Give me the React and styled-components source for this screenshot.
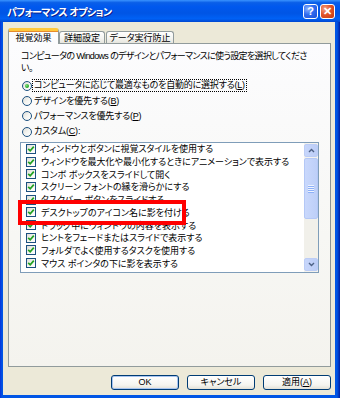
import React from "react";
import styled, { createGlobalStyle, css } from "styled-components";

const GlobalStyle = createGlobalStyle`
	html, body {
		margin: 0;
		padding: 0;
		background: #ece9d8;
	}
	body {
		font-family: "Liberation Sans", "Noto Sans CJK JP", sans-serif;
		font-feature-settings: "palt";
		font-size: 9px;
		color: #000;
	}
`;

const options = [
	{ label: "コンピュータに応じて最適なものを自動的に選択する", key: "L", checked: true, focus: true },
	{ label: "デザインを優先する", key: "B" },
	{ label: "パフォーマンスを優先する", key: "P" },
	{ label: "カスタム", key: "C", colon: true },
];

const effects = [
	"ウィンドウとボタンに視覚スタイルを使用する",
	"ウィンドウを最大化や最小化するときにアニメーションで表示する",
	"コンボ ボックスをスライドして開く",
	"スクリーン フォントの縁を滑らかにする",
	"タスクバー ボタンをスライドする",
	"デスクトップのアイコン名に影を付ける",
	"ドラッグ中にウィンドウの内容を表示する",
	"ヒントをフェードまたはスライドで表示する",
	"フォルダでよく使用するタスクを使用する",
	"マウス ポインタの下に影を表示する",
];

const Window = styled.div`
	width: 340px;
	height: 398px;
	display: flex;
	flex-direction: column;
	background: linear-gradient(90deg, #0831d9 0, #0055e5 2px, #0055e5 calc(100% - 3px), #001ea0 100%);
	overflow: hidden;
`;

const TitleBar = styled.div`
	height: 22px;
	flex-shrink: 0;
	display: flex;
	align-items: center;
	padding: 0 5px 0 7px;
	background: linear-gradient(
		180deg,
		#3a93ff 0,
		#0a5fe8 12%,
		#0058ee 30%,
		#0055e5 60%,
		#0061f5 85%,
		#0047d0 100%
	);
`;

const TitleText = styled.div`
	flex: 1;
	color: #fff;
	font-weight: bold;
	font-size: 10px;
	letter-spacing: -0.6px;
	text-shadow: 1px 1px 0 #0a1e8c;
`;

const TitleButton = styled.div`
	width: 15px;
	height: 15px;
	margin-left: 2px;
	border: 1px solid #fff;
	border-radius: 3px;
	box-sizing: border-box;
	display: flex;
	align-items: center;
	justify-content: center;
	color: #fff;
	font-weight: bold;
	font-size: 11px;
	line-height: 1;
	${(p) =>
		p.close
			? css`
					background: radial-gradient(circle at 30% 30%, #f0a48a 0, #e2542a 45%, #c13a12 100%);
			  `
			: css`
					background: radial-gradient(circle at 30% 30%, #8fb4ff 0, #2f6cf0 45%, #1a4fd6 100%);
			  `}
`;

const Client = styled.div`
	flex: 1;
	margin: 0 5px 3px 3px;
	background: #ece9d8;
	display: flex;
	flex-direction: column;
	padding: 6px 4px 0 5px;
`;

const TabStrip = styled.div`
	display: flex;
	align-items: flex-end;
	height: 15px;
	position: relative;
	z-index: 1;
`;

const Tab = styled.div`
	box-sizing: border-box;
	width: ${(p) => p.w}px;
	margin-right: ${(p) => p.gap || 0}px;
	border: 1px solid #919b9c;
	border-bottom: none;
	border-radius: 3px 3px 0 0;
	display: flex;
	align-items: center;
	justify-content: center;
	${(p) =>
		p.active
			? css`
					height: 16px;
					margin-bottom: -1px;
					background: #fcfcfe;
					border-top: 3px solid #ffc83c;
					box-shadow: inset 0 1px 0 #e68b2c;
					padding-bottom: 1px;
			  `
			: css`
					height: 12px;
					background: linear-gradient(180deg, #ffffff 0, #f3f3ef 60%, #e6e5de 100%);
			  `}
`;

const Panel = styled.div`
	flex: 1;
	box-sizing: border-box;
	border: 1px solid #919b9c;
	border-right-color: #8a9293;
	background: linear-gradient(180deg, #fcfcfe 0, #f7f7f4 60%, #f4f3ee 100%);
	padding: 6px 11px 0 11px;
	display: flex;
	flex-direction: column;
`;

const Description = styled.div`
	line-height: 12px;
	white-space: nowrap;
	padding-left: 1px;
	letter-spacing: -0.65px;
`;

const RadioGroup = styled.div`
	display: flex;
	flex-direction: column;
	margin-top: 4px;
`;

const RadioRow = styled.div`
	height: 15.4px;
	display: flex;
	align-items: center;
	padding-left: 2px;
`;

const RadioCircle = styled.span`
	width: 10px;
	height: 10px;
	box-sizing: border-box;
	border-radius: 50%;
	border: 1px solid #1c5180;
	background: linear-gradient(135deg, #dcdcd7 0, #f4f4f0 50%, #ffffff 100%);
	display: flex;
	align-items: center;
	justify-content: center;
	margin-right: 1px;
	flex-shrink: 0;
`;

const RadioDot = styled.span`
	width: 4px;
	height: 4px;
	border-radius: 50%;
	background: radial-gradient(circle at 35% 35%, #7be37b 0, #21a121 70%);
`;

const Label = styled.span`
	padding: 0 1px;
	line-height: 11px;
	white-space: nowrap;
	letter-spacing: -0.2px;
	${(p) =>
		p.focus &&
		css`
			outline: 1px dotted #000;
			outline-offset: 0;
		`}
`;

const Key = styled.span`
	text-decoration: underline;
`;

const ListBox = styled.div`
	position: relative;
	margin-top: 2px;
	height: 131px;
	box-sizing: border-box;
	border: 1px solid #7f9db9;
	background: #fff;
	display: flex;
`;

const ItemList = styled.div`
	flex: 1;
	overflow: hidden;
`;

const Item = styled.div`
	height: 12.7px;
	display: flex;
	align-items: center;
	padding-left: 5px;
	white-space: nowrap;
`;

const CheckBox = styled.span`
	width: 10px;
	height: 10px;
	box-sizing: border-box;
	border: 1px solid #1c5180;
	background: linear-gradient(135deg, #dcdcd7 0, #f4f4f0 50%, #ffffff 100%);
	margin-right: 5px;
	flex-shrink: 0;
	display: flex;
	align-items: center;
	justify-content: center;
`;

const ScrollBar = styled.div`
	width: 14px;
	display: flex;
	flex-direction: column;
	background: #f3f2ee;
`;

const ScrollButton = styled.div`
	height: 13px;
	box-sizing: border-box;
	border: 1px solid #bccdf6;
	border-radius: 2px;
	background: linear-gradient(90deg, #c7d6fb 0, #bccdf6 100%);
	display: flex;
	align-items: center;
	justify-content: center;
	margin: ${(p) => (p.down ? "0 0 1px" : "1px 0 0")};
`;

const Thumb = styled.div`
	height: 61px;
	box-sizing: border-box;
	margin-top: 1px;
	border: 1px solid #b4c8f6;
	border-radius: 2px;
	background: linear-gradient(90deg, #c9d8fc 0, #bdcff8 100%);
	display: flex;
	flex-direction: column;
	align-items: center;
	justify-content: center;
	gap: 1px;
`;

const Grip = styled.span`
	width: 6px;
	height: 1px;
	background: #eef3fe;
	box-shadow: 0 1px 0 #8cb0f8;
`;

const Track = styled.div`
	flex: 1;
	background: #f1f0ea;
`;

const Highlight = styled.div`
	position: absolute;
	left: -3px;
	top: 57px;
	width: 168px;
	height: 25px;
	box-sizing: border-box;
	border: 4px solid #ff0000;
	pointer-events: none;
`;

const ButtonRow = styled.div`
	display: flex;
	justify-content: flex-end;
	gap: 8px;
	margin: 8px 0 5px;
`;

const Button = styled.div`
	width: 68px;
	height: 15px;
	box-sizing: border-box;
	border: 1px solid #003c74;
	border-radius: 3px;
	background: linear-gradient(180deg, #ffffff 0, #f5f4ef 70%, #e3e0d6 100%);
	display: flex;
	align-items: center;
	justify-content: center;
	line-height: 1;
	${(p) =>
		p.primary &&
		css`
			box-shadow: inset 0 0 0 1px #a8c4f0;
		`}
`;

const Check = () => (
	<svg width="8" height="8" viewBox="0 0 8 8">
		<path d="M1.2 3.8 L3.2 5.8 L6.8 1.6" fill="none" stroke="#21a121" strokeWidth="1.7" />
	</svg>
);

const Chevron = ({ down }) => (
	<svg width="7" height="5" viewBox="0 0 7 5">
		<path
			d={down ? "M1 1 L3.5 3.5 L6 1" : "M1 4 L3.5 1.5 L6 4"}
			fill="none"
			stroke="#4d6185"
			strokeWidth="1.4"
		/>
	</svg>
);

const App = () => {
	return (
		<>
			<GlobalStyle />
			<Window>
				<TitleBar>
					<TitleText>パフォーマンス オプション</TitleText>
					<TitleButton>?</TitleButton>
					<TitleButton close>✕</TitleButton>
				</TitleBar>
				<Client>
					<TabStrip>
						<Tab active w={51} gap={0}>視覚効果</Tab>
						<Tab w={46} gap={1}>詳細設定</Tab>
						<Tab w={68}>データ実行防止</Tab>
					</TabStrip>
					<Panel>
						<Description>
							コンピュータの Windows のデザインとパフォーマンスに使う設定を選択してくださ
							<br />
							い。
						</Description>
						<RadioGroup>
							{options.map((o) => (
								<RadioRow key={o.key}>
									<RadioCircle>{o.checked && <RadioDot />}</RadioCircle>
									<Label focus={o.focus}>
										{o.label}(<Key>{o.key}</Key>){o.colon && ":"}
									</Label>
								</RadioRow>
							))}
						</RadioGroup>
						<ListBox>
							<ItemList>
								{effects.map((e, i) => (
									<Item key={i}>
										<CheckBox>
											<Check />
										</CheckBox>
										{e}
									</Item>
								))}
							</ItemList>
							<ScrollBar>
								<ScrollButton>
									<Chevron />
								</ScrollButton>
								<Thumb>
									<Grip />
									<Grip />
									<Grip />
									<Grip />
								</Thumb>
								<Track />
								<ScrollButton down>
									<Chevron down />
								</ScrollButton>
							</ScrollBar>
							<Highlight />
						</ListBox>
					</Panel>
					<ButtonRow>
						<Button primary>OK</Button>
						<Button>キャンセル</Button>
						<Button>
							適用(<Key>A</Key>)
						</Button>
					</ButtonRow>
				</Client>
			</Window>
		</>
	);
};

export default App;
